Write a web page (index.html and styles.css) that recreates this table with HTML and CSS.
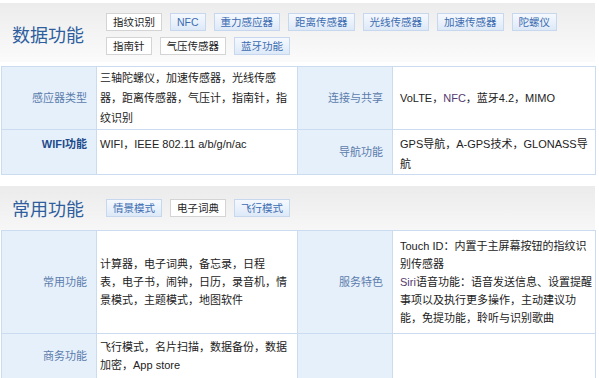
FILE: index.html
```html
<!DOCTYPE html>
<html lang="zh-CN">
<head>
<meta charset="utf-8">
<title>功能参数</title>
<link rel="stylesheet" href="styles.css">
</head>
<body>
<div class="sheet">
  <section class="group">
    <div class="group-head head-a">
      <h2 class="group-title">数据功能</h2>
      <ul class="tags">
        <li class="tag">指纹识别</li>
        <li class="tag tag-blue">NFC</li>
        <li class="tag tag-blue">重力感应器</li>
        <li class="tag tag-blue">距离传感器</li>
        <li class="tag tag-blue">光线传感器</li>
        <li class="tag tag-blue">加速传感器</li>
        <li class="tag tag-blue">陀螺仪</li>
        <li class="tag">指南针</li>
        <li class="tag">气压传感器</li>
        <li class="tag tag-blue">蓝牙功能</li>
      </ul>
    </div>
    <table class="specs specs-a">
      <colgroup><col class="c-label"><col class="c-value"><col class="c-label"><col class="c-value2"></colgroup>
      <tr>
        <th>感应器类型</th>
        <td>三轴陀螺仪，加速传感器，光线传感器，距离传感器，气压计，指南针，指纹识别</td>
        <th>连接与共享</th>
        <td class="v2">VoLTE，<span class="link">NFC</span>，蓝牙4.2，MIMO</td>
      </tr>
      <tr class="row-low">
        <th class="strong">WIFI功能</th>
        <td>WIFI，IEEE 802.11 a/b/g/n/ac</td>
        <th>导航功能</th>
        <td class="v2">GPS导航，A-GPS技术，GLONASS导航</td>
      </tr>
    </table>
  </section>
  <section class="group">
    <div class="group-head head-b">
      <h2 class="group-title">常用功能</h2>
      <ul class="tags">
        <li class="tag tag-blue">情景模式</li>
        <li class="tag">电子词典</li>
        <li class="tag tag-blue">飞行模式</li>
      </ul>
    </div>
    <table class="specs specs-b">
      <colgroup><col class="c-label"><col class="c-value"><col class="c-label"><col class="c-value2"></colgroup>
      <tr class="row-tall">
        <th>常用功能</th>
        <td>计算器，电子词典，备忘录，日程<br>表，电子书，闹钟，日历，录音机，情景模式，主题模式，地图软件</td>
        <th>服务特色</th>
        <td class="v2">Touch ID：内置于主屏幕按钮的指纹识别传感器<br><span class="link">Siri</span>语音功能：语音发送信息、设置提醒事项以及执行更多操作，主动建议功能，免提功能，聆听与识别歌曲</td>
      </tr>
      <tr>
        <th>商务功能</th>
        <td>飞行模式，名片扫描，数据备份，数据加密，App store</td>
        <th></th>
        <td class="v2"></td>
      </tr>
    </table>
  </section>
</div>
</body>
</html>
```

FILE: styles.css
```css
body {
  margin: 0;
  background: #ffffff;
  font-family: "Liberation Sans", "Noto Sans CJK SC", sans-serif;
  font-size: 11px;
  color: #222222;
}

.sheet {
  width: 595px;
  padding-top: 3px;
}

.group + .group {
  margin-top: 11px;
}

.group-head {
  display: flex;
  align-items: center;
}

.head-a {
  padding: 10px 0 7px;
  background: linear-gradient(#ececec, #fbfbfb);
}

.head-b {
  padding: 10px 0 10px;
  background: linear-gradient(#ebebeb, #f7f7f7);
}

.group-title {
  width: 106px;
  box-sizing: border-box;
  padding-left: 12px;
  margin: 0;
  font-family: "Noto Sans CJK SC", sans-serif;
  font-size: 18px;
  font-weight: normal;
  line-height: 24px;
  color: #2f5e9e;
}

.tags {
  display: flex;
  flex-wrap: wrap;
  gap: 6px 8px;
  width: 480px;
  margin: 0;
  padding: 0;
  list-style: none;
}

.tag {
  height: 18px;
  box-sizing: border-box;
  padding: 0 6px;
  line-height: 16px;
  font-size: 10.5px;
  border: 1px solid #d4d4d4;
  background: #ffffff;
  color: #222222;
}

.tag-blue {
  background: linear-gradient(#f5f9fe, #dde9f8);
  border-color: #c7d8ee;
  color: #3c6cb0;
}

.specs {
  width: 594px;
  margin-left: 1px;
  border-collapse: collapse;
  table-layout: fixed;
}

.specs-a {
  margin-top: 4px;
  line-height: 20px;
}

.specs-b {
  line-height: 18px;
}

.c-label { width: 95px; }
.c-value { width: 201px; }
.c-value2 { width: 203px; }

.specs th {
  background: #e6f0fb;
  color: #5b7cab;
  font-weight: normal;
  text-align: right;
  padding: 0 9px 0 4px;
  border: 1px solid #cbdcf1;
  vertical-align: middle;
}

.specs th.strong {
  font-weight: bold;
  color: #1f4b8c;
}

.specs td {
  padding: 1px 5px 1px 3px;
  border: 1px solid #cbdcf1;
  vertical-align: middle;
  text-align: left;
  background: #ffffff;
}

.specs-a .row-low td.v2 {
  padding-top: 4px;
  padding-bottom: 0;
}

.specs-a .row-low th.strong,
.specs-a .row-low td:nth-child(2) {
  vertical-align: top;
  padding-top: 4px;
}

.specs-b td {
  padding-top: 4px;
  padding-bottom: 4px;
}

.specs-b .row-tall td {
  padding-top: 6px;
  padding-bottom: 6px;
}

.specs td.v2 {
  padding-left: 7px;
  padding-right: 0;
}

.link {
  color: #553a6e;
}
```
